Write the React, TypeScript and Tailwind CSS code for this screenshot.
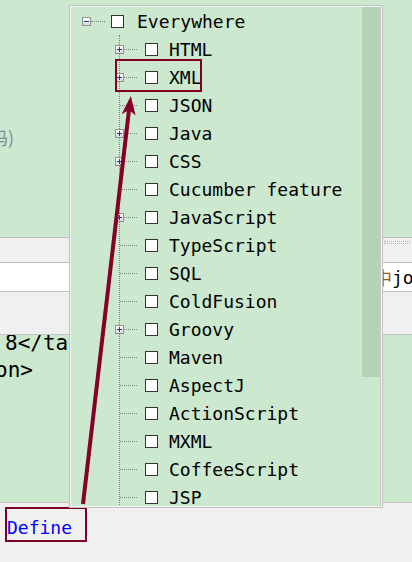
const languages = [
  { name: 'HTML', expandable: true },
  { name: 'XML', expandable: true },
  { name: 'JSON' },
  { name: 'Java', expandable: true },
  { name: 'CSS', expandable: true },
  { name: 'Cucumber feature' },
  { name: 'JavaScript', expandable: true },
  { name: 'TypeScript' },
  { name: 'SQL' },
  { name: 'ColdFusion' },
  { name: 'Groovy', expandable: true },
  { name: 'Maven' },
  { name: 'AspectJ' },
  { name: 'ActionScript' },
  { name: 'MXML' },
  { name: 'CoffeeScript' },
  { name: 'JSP' }
];

function Expander({ open }: { open?: boolean }) {
  return (
    <span className="relative flex size-[9px] shrink-0 items-center justify-center border border-[#929292] bg-linear-to-b from-white to-[#d9d9d9]">
      <span className="absolute h-px w-[5px] bg-[#1d3d8f]" />
      {!open && <span className="absolute h-[5px] w-px bg-[#1d3d8f]" />}
    </span>
  );
}

function Checkbox() {
  return <span className="size-[13px] shrink-0 border border-[#333] bg-white" />;
}

function ScopeTree() {
  return (
    <div className="flex-1 overflow-hidden font-['DejaVu_Sans_Mono',monospace] text-[18px] text-black">
      <div className="flex h-[28px] items-center">
        <span className="w-[11px] shrink-0" />
        <Expander open />
        <span className="w-[14px] shrink-0 border-t border-dotted border-[#808080]" />
        <span className="w-[6px] shrink-0" />
        <Checkbox />
        <span className="ml-[13px] whitespace-nowrap">Everywhere</span>
      </div>
      <div className="ml-[48px] border-l border-dotted border-[#808080]">
        {languages.map((lang) => (
          <div key={lang.name} className="flex h-[28px] items-center">
            {lang.expandable ? (
              <>
                <span className="-ml-[5px]">
                  <Expander />
                </span>
                <span className="w-[13px] shrink-0 border-t border-dotted border-[#808080]" />
              </>
            ) : (
              <span className="w-[17px] shrink-0 border-t border-dotted border-[#808080]" />
            )}
            <span className="w-[8px] shrink-0" />
            <Checkbox />
            <span className="ml-[11px] whitespace-nowrap">{lang.name}</span>
          </div>
        ))}
      </div>
    </div>
  );
}

export default function App() {
  return (
    <div className="relative h-[562px] w-[412px] overflow-hidden bg-[#f0f0f0] font-['DejaVu_Sans_Mono',monospace]">
      {/* page behind the popup */}
      <div className="flex h-full flex-col">
        <div className="h-[237px] shrink-0 bg-[#cce8cf] pt-[124px]">
          <span className="-ml-[10px] font-['Noto_Sans_CJK_SC',sans-serif] text-[18px] text-[#838b96]">
            码)
          </span>
        </div>
        <div className="flex h-[25px] shrink-0 justify-end border-t border-[#bdbdbd] bg-[#f0f0f0] pt-[3px]">
          <span className="mr-[2px] h-[3px] w-[26px] border-y border-dotted border-[#b4b4b4]" />
        </div>
        <div className="flex h-[30px] shrink-0 items-center border-y border-[#bcbcbc] bg-white pl-[374px] text-[18px] whitespace-nowrap">
          <span className="font-['Noto_Sans_CJK_SC',sans-serif] text-[#9a5418]">中</span>
          <span className="text-black">jo</span>
        </div>
        <div className="h-[42px] shrink-0 bg-[#f0f0f0]" />
        <div className="h-[169px] shrink-0 overflow-hidden border-y border-[#c4c4c4] bg-[#cce8cf]">
          <div className="-mt-[5px] text-[21px] leading-[27px] whitespace-nowrap text-black">
            <div className="pl-[5px]">8&lt;/target&gt;</div>
            <div className="-ml-[5px]">on&gt;</div>
          </div>
        </div>
        <div className="flex-1 bg-[#f0f0f0] pt-[4px] pl-[5px]">
          <div className="flex h-[35px] w-[82px] items-center border-2 border-[#800022] pt-[6px] text-[18px] text-[#0000ff]">
            Define
          </div>
        </div>
      </div>

      {/* scope chooser popup */}
      <div className="absolute top-[5px] left-[69px] h-[503px] w-[314px] border border-[#c2c2c2] bg-[#cce8cf]">
        <div className="flex h-full border border-[#f4f4f4]">
          <ScopeTree />
          <div className="w-[19px] shrink-0 border-r border-[#c8c8c8]">
            <div className="h-[370px] w-[18px] bg-[#b3d3b7]" />
          </div>
        </div>
      </div>

      {/* annotation */}
      <div className="pointer-events-none absolute top-[59px] left-[115px] h-[33px] w-[87px] border-2 border-[#800022]" />
      <svg
        className="pointer-events-none absolute inset-0"
        width="412"
        height="562"
        viewBox="0 0 412 562"
      >
        <line x1="83" y1="504" x2="129" y2="110" stroke="#840026" strokeWidth="4" />
        <polygon
          points="130.8,96 135.6,115.6 129.1,110 121.6,114.2"
          fill="#840026"
        />
      </svg>
    </div>
  );
}
